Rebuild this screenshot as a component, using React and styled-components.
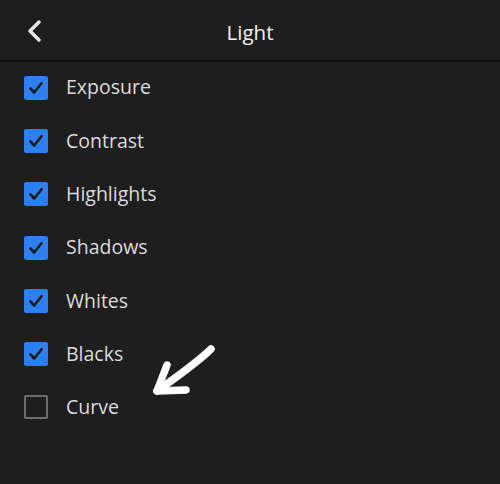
import React from "react";
import styled, { createGlobalStyle } from "styled-components";

const Global = createGlobalStyle`
  html, body { margin: 0; padding: 0; background: #1e1e1e; }
  body { font-family: "Open Sans", "Noto Sans", sans-serif; }
`;

const Screen = styled.div`
  width: 500px;
  height: 484px;
  background: #1e1e1e;
  position: relative;
  overflow: hidden;
`;

const Header = styled.header`
  display: grid;
  grid-template-columns: 60px 1fr 60px;
  align-items: center;
  border-bottom: 2px solid #0f0f0f;
  box-sizing: border-box;
  height: 62px;
`;

const BackButton = styled.button`
  background: none;
  border: 0;
  padding: 2px 0 0 26px;
  display: flex;
  align-items: center;
  height: 100%;
  cursor: pointer;
`;

const Title = styled.h1`
  margin: 0;
  text-align: center;
  color: #f2f2f2;
  font-size: 20.5px;
  font-weight: 400;
  line-height: 1;
  padding-top: 4px;
`;

const List = styled.ul`
  list-style: none;
  margin: 0;
  padding: 0 0 0 24px;
  display: flex;
  flex-direction: column;
`;

const Row = styled.li`
  height: 53.3px;
  display: flex;
  align-items: center;
  gap: 18px;
  &:first-child { margin-top: -1px; }
`;

const Box = styled.span`
  width: 24px;
  height: 24px;
  box-sizing: border-box;
  border-radius: 2px;
  display: flex;
  align-items: center;
  justify-content: center;
  background: ${(p) => (p.$checked ? "#2c80f2" : "transparent")};
  border: ${(p) => (p.$checked ? "none" : "2px solid #6e6e6e")};
`;

const Label = styled.span`
  color: #dcdcdc;
  font-size: 19.5px;
  line-height: 1;
  padding-bottom: 1px;
`;

const Arrow = styled.svg`
  position: absolute;
  left: 148px;
  top: 338px;
`;

const items = [
  ["Exposure", true],
  ["Contrast", true],
  ["Highlights", true],
  ["Shadows", true],
  ["Whites", true],
  ["Blacks", true],
  ["Curve", false],
];

export default function App() {
  return (
    <Screen>
      <Global />
      <Header>
        <BackButton aria-label="Back">
          <svg width="16" height="22" viewBox="0 0 16 22">
            <path d="M13 2 L4 11 L13 20" fill="none" stroke="#e6e6e6" strokeWidth="3.4" strokeLinecap="round" strokeLinejoin="round" />
          </svg>
        </BackButton>
        <Title>Light</Title>
        <span />
      </Header>
      <List>
        {items.map(([name, checked]) => (
          <Row key={name}>
            <Box $checked={checked}>
              {checked && (
                <svg width="18" height="18" viewBox="0 0 18 18">
                  <path d="M3.5 9.5 L7.2 13.5 L14.5 4.2" fill="none" stroke="#1b1b1b" strokeWidth="2.6" strokeLinecap="round" strokeLinejoin="round" />
                </svg>
              )}
            </Box>
            <Label>{name}</Label>
          </Row>
        ))}
      </List>
      <Arrow width="80" height="70" viewBox="0 0 80 70">
        <path d="M63 11 C50 24 30 38 9 53" fill="none" stroke="#ffffff" strokeWidth="7.5" strokeLinecap="round" />
        <path d="M19 27 L9 53 L38 52" fill="none" stroke="#ffffff" strokeWidth="7.5" strokeLinecap="round" strokeLinejoin="round" />
      </Arrow>
    </Screen>
  );
}
